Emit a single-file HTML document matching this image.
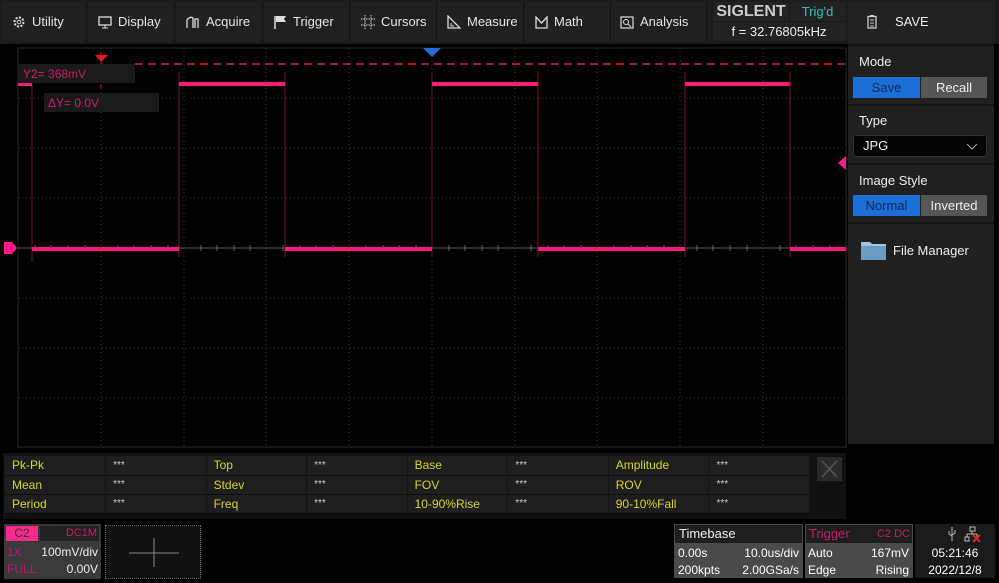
<!DOCTYPE html>
<html><head><meta charset="utf-8"><style>
*{margin:0;padding:0;box-sizing:border-box}
body{width:999px;height:583px;background:#000;font-family:"Liberation Sans",sans-serif;position:relative;overflow:hidden;color:#ddd}
.a{position:absolute}
.top{left:0;top:0;width:999px;height:44px;background:#1c1c1c}
.mi{position:absolute;top:2px;height:40px;background:#202020;border-right:1px solid #111;font-size:13px;color:#e6e6e6;line-height:40px;padding-left:10px}
.mi svg{vertical-align:-3px;margin-right:6px}
.panel{left:848px;top:44px;width:146px;height:400px;background:#202020}
.lbl{font-size:13px;color:#eee}
.btn{position:absolute;height:21px;font-size:13px;line-height:21px;text-align:center}
.sep{position:absolute;left:848px;width:146px;height:2px;background:#151515}
table{border-collapse:collapse}
.meas{left:5px;top:456px;width:805px;font-size:12px}
.meas td{height:19px;border-bottom:1px solid #0e0e0e;border-right:1px solid #141414;background:#1e1e1e;padding-left:7px;width:101px}
.y{color:#d6d62a}.w{color:#ccc;font-size:10px}
</style></head><body>
<div class="a top"></div>
<div class="mi" style="left:2px;width:85px"><svg width="14" height="14" viewBox="0 0 14 14"><circle cx="7" cy="7" r="4.5" fill="none" stroke="#ddd" stroke-width="2" stroke-dasharray="2 1.5"/><circle cx="7" cy="7" r="1.8" fill="none" stroke="#ddd"/></svg>Utility</div>
<div class="mi" style="left:88px;width:87px"><svg width="14" height="13" viewBox="0 0 14 13"><rect x="1" y="1" width="12" height="8" fill="none" stroke="#ddd" stroke-width="1.3"/><path d="M4 12h6M7 9v3" stroke="#ddd"/></svg>Display</div>
<div class="mi" style="left:176px;width:87px"><svg width="14" height="13" viewBox="0 0 14 13"><path d="M1 12V4Q4 0 7 2v10M9 12V3h3v9" fill="none" stroke="#ddd" stroke-width="1.3"/></svg>Acquire</div>
<div class="mi" style="left:264px;width:86px"><svg width="13" height="14" viewBox="0 0 13 14"><path d="M1 1v13" stroke="#ddd" stroke-width="1.5"/><path d="M2 1h10l-2 3 2 3H2z" fill="#ddd"/></svg>Trigger</div>
<div class="mi" style="left:351px;width:86px"><svg width="14" height="14" viewBox="0 0 14 14"><path d="M4 0v14M10 0v14M0 4h14M0 10h14" stroke="#ddd" stroke-dasharray="1.5 1"/></svg>Cursors</div>
<div class="mi" style="left:437px;width:87px"><svg width="14" height="14" viewBox="0 0 14 14"><path d="M1 1v12h12z" fill="none" stroke="#ddd" stroke-width="1.3"/><path d="M4 8v3h3" fill="none" stroke="#ddd"/></svg>Measure</div>
<div class="mi" style="left:525px;width:86px"><svg width="13" height="13" viewBox="0 0 13 13"><path d="M1 1v11h11V1L6.5 7z" fill="none" stroke="#ddd" stroke-width="1.3"/></svg>Math</div>
<div class="mi" style="left:611px;width:96px;padding-left:9px"><svg width="14" height="14" viewBox="0 0 14 14"><rect x="1" y="2" width="12" height="11" fill="none" stroke="#ddd" stroke-width="1.2"/><circle cx="6" cy="7" r="2.5" fill="none" stroke="#ddd"/><path d="M8 9l3 3" stroke="#ddd"/></svg>Analysis</div>
<div class="a" style="left:712px;top:2px;width:133px;height:40px;background:#181818"></div>
<div class="a" style="left:713px;top:2px;width:76px;height:19px;background:#222;color:#ccc;font-weight:bold;font-size:16px;line-height:19px;text-align:center">SIGLENT</div>
<div class="a" style="left:790px;top:2px;width:55px;height:19px;background:#222;color:#2cc6c6;font-size:13px;line-height:19px;text-align:center">Trig'd</div>
<div class="a" style="left:713px;top:22px;width:132px;height:19px;background:#222;color:#eee;font-size:13px;line-height:19px;text-align:center">f = 32.76805kHz</div>
<div class="a" style="left:848px;top:2px;width:145px;height:40px;background:#222;font-size:13px;line-height:40px;color:#eee"><svg class="a" style="left:19px;top:13px" width="10" height="14" viewBox="0 0 10 14"><rect x="1" y="1.5" width="8" height="11.5" fill="none" stroke="#ccc" stroke-width="1.3"/><path d="M3 5h4M3 8h4M3 11h4M3 0.5h4" stroke="#ccc"/></svg><span style="position:absolute;left:47px">SAVE</span></div>

<svg class="a" style="left:0;top:44px" width="848" height="405" viewBox="0 44 848 405">
<rect x="18" y="48" width="828" height="399" fill="#000" stroke="#2a2a2a"/>
<g stroke="#3c3c3c" stroke-dasharray="1 3">
<path d="M101 48v399M184 48v399M266 48v399M349 48v399M515 48v399M597 48v399M680 48v399M763 48v399M432 48v399"/>
<path d="M18 98h828M18 148h828M18 198h828M18 298h828M18 348h828M18 398h828"/>
</g>
<path d="M18 248h828" stroke="#555"/>
<g stroke="#666"><path d="M35 245v6M51 245v6M68 245v6M85 245v6M118 245v6M134 245v6M151 245v6M168 245v6M201 245v6M217 245v6M234 245v6M250 245v6M283 245v6M300 245v6M316 245v6M333 245v6M366 245v6M383 245v6M399 245v6M416 245v6M449 245v6M465 245v6M482 245v6M498 245v6M531 245v6M548 245v6M564 245v6M581 245v6M614 245v6M631 245v6M647 245v6M664 245v6M697 245v6M713 245v6M730 245v6M747 245v6M780 245v6M796 245v6M813 245v6M830 245v6"/></g>
<path d="M135 64h711" stroke="#d01a6a" stroke-width="1.5" stroke-dasharray="8 5"/>
<path d="M101 52v40" stroke="#d01a3a" stroke-dasharray="4 4"/>
<polygon points="95,55 108,55 101,62" fill="#e81818"/>
<polygon points="423,48 441,48 432,57" fill="#2a6ad8"/>
<polygon points="846,156 846,170 838,163" fill="#ff1a8c"/>
<g stroke="#7a0e3e" stroke-width="1"><path d="M32 82v180M179 72v185M285 72v185M432 72v185M538 72v185M685 72v185M790 72v185"/></g>
<g stroke="#ff1a7a" stroke-width="4" fill="none"><path d="M18 84h14M32 249h147M179 84h106M285 249h147M432 84h106M538 249h147M685 84h105M790 249h56"/></g>
<rect x="18" y="64" width="117" height="19" fill="#1a1a1a"/>
<text x="23" y="78" fill="#d01a6a" font-size="12" font-family="Liberation Sans">Y2= 368mV</text>
<rect x="44" y="93" width="115" height="19" fill="#1a1a1a"/>
<text x="48" y="107" fill="#d01a6a" font-size="12" font-family="Liberation Sans">ΔY= 0.0V</text>
<polygon points="4,242 12,242 17,248 12,254 4,254" fill="#ff1a8c"/>
</svg>

<div class="a panel"></div>
<div class="sep" style="top:44px"></div>
<div class="a lbl" style="left:859px;top:54px">Mode</div>
<div class="btn" style="left:853px;top:77px;width:67px;background:#1d6fd6;color:#0c2a55">Save</div>
<div class="btn" style="left:921px;top:77px;width:66px;background:#555;color:#eee">Recall</div>
<div class="sep" style="top:104px"></div>
<div class="a lbl" style="left:859px;top:113px">Type</div>
<div class="a" style="left:853px;top:135px;width:134px;height:22px;background:#050505;border:1px solid #333;border-radius:3px;font-size:13px;line-height:20px;padding-left:9px;color:#eee">JPG<svg class="a" style="left:112px;top:7px" width="12" height="7" viewBox="0 0 12 7"><path d="M1 1l5 5 5-5" fill="none" stroke="#aaa"/></svg></div>
<div class="sep" style="top:163px"></div>
<div class="a lbl" style="left:859px;top:173px">Image Style</div>
<div class="btn" style="left:853px;top:195px;width:67px;background:#1d6fd6;color:#0c2a55">Normal</div>
<div class="btn" style="left:921px;top:195px;width:66px;background:#555;color:#eee">Inverted</div>
<div class="sep" style="top:222px"></div>
<svg class="a" style="left:860px;top:239px" width="27" height="22" viewBox="0 0 27 22"><path d="M1 3h9l2 2h14v16H1z" fill="#9ec3de"/><rect x="1" y="7" width="25" height="14" fill="#6e9cc0"/></svg>
<div class="a lbl" style="left:893px;top:243px">File Manager</div>

<div class="a" style="left:3px;top:453px;width:843px;height:66px;background:#111"></div>
<table class="a meas">
<tr><td class="y">Pk-Pk</td><td class="w">***</td><td class="y">Top</td><td class="w">***</td><td class="y">Base</td><td class="w">***</td><td class="y">Amplitude</td><td class="w">***</td></tr>
<tr><td class="y">Mean</td><td class="w">***</td><td class="y">Stdev</td><td class="w">***</td><td class="y">FOV</td><td class="w">***</td><td class="y">ROV</td><td class="w">***</td></tr>
<tr><td class="y">Period</td><td class="w">***</td><td class="y">Freq</td><td class="w">***</td><td class="y">10-90%Rise</td><td class="w">***</td><td class="y">90-10%Fall</td><td class="w">***</td></tr>
</table>
<div class="a" style="left:817px;top:457px;width:25px;height:24px;background:#2a2a2a"><svg width="25" height="24"><path d="M5 4l15 16M20 4L5 20" stroke="#555" stroke-width="1.5"/></svg></div>

<div class="a" style="left:4px;top:524px;width:97px;height:55px;background:#3a3a3a"></div>
<div class="a" style="left:6px;top:526px;width:32px;height:15px;background:#ff2a8c;color:#333;font-size:12px;line-height:15px;text-align:center">C2</div>
<div class="a" style="left:40px;top:526px;width:59px;height:15px;background:#222;color:#d01a6a;font-size:11px;line-height:15px;text-align:right;padding-right:2px">DC1M</div>
<div class="a" style="left:7px;top:545px;font-size:12px;color:#c0186a">1X</div>
<div class="a" style="left:36px;top:545px;width:62px;text-align:right;font-size:12px;color:#eee">100mV/div</div>
<div class="a" style="left:7px;top:562px;font-size:12px;color:#c0186a">FULL</div>
<div class="a" style="left:50px;top:562px;width:48px;text-align:right;font-size:12px;color:#eee">0.00V</div>
<div class="a" style="left:105px;top:525px;width:96px;height:54px;border:1px dotted #666;background:#111"><svg width="94" height="52"><path d="M23 27h50M48 12v29" stroke="#888"/></svg></div>

<div class="a" style="left:674px;top:524px;width:129px;height:54px;background:#4a4a4a"></div>
<div class="a" style="left:675px;top:525px;width:127px;height:18px;background:#1e1e1e;font-size:13px;color:#eee;padding-left:4px;line-height:18px">Timebase</div>
<div class="a" style="left:678px;top:546px;font-size:12px;color:#fff">0.00s</div>
<div class="a" style="left:730px;top:546px;width:69px;text-align:right;font-size:12px;color:#fff">10.0us/div</div>
<div class="a" style="left:678px;top:563px;font-size:12px;color:#fff">200kpts</div>
<div class="a" style="left:730px;top:563px;width:69px;text-align:right;font-size:12px;color:#fff">2.00GSa/s</div>
<div class="a" style="left:805px;top:524px;width:108px;height:54px;background:#4a4a4a"></div>
<div class="a" style="left:806px;top:525px;width:106px;height:18px;background:#1e1e1e;font-size:13px;color:#d01a6a;padding-left:3px;line-height:18px">Trigger<span style="position:absolute;right:2px;font-size:11px">C2 DC</span></div>
<div class="a" style="left:808px;top:546px;font-size:12px;color:#fff">Auto</div>
<div class="a" style="left:850px;top:546px;width:59px;text-align:right;font-size:12px;color:#fff">167mV</div>
<div class="a" style="left:808px;top:563px;font-size:12px;color:#fff">Edge</div>
<div class="a" style="left:850px;top:563px;width:59px;text-align:right;font-size:12px;color:#fff">Rising</div>
<div class="a" style="left:915px;top:524px;width:80px;height:54px;background:#1a1a1a"></div>
<svg class="a" style="left:946px;top:526px" width="36" height="16"><path d="M6 1v14M3 5v3l3 2M9 4v3l-3 2" stroke="#bbb" fill="none"/><rect x="24" y="1" width="5" height="4" fill="none" stroke="#bbb"/><path d="M26 5v3M21 8h10M21 8v3M31 8v3" stroke="#bbb" fill="none"/><rect x="19" y="11" width="4" height="4" fill="none" stroke="#bbb"/><path d="M27 9l7 7M34 9l-7 7" stroke="#e82020" stroke-width="2"/></svg>
<div class="a" style="left:915px;top:546px;width:80px;text-align:center;font-size:12px;color:#fff">05:21:46</div>
<div class="a" style="left:915px;top:563px;width:80px;text-align:center;font-size:12px;color:#fff">2022/12/8</div>
</body></html>
